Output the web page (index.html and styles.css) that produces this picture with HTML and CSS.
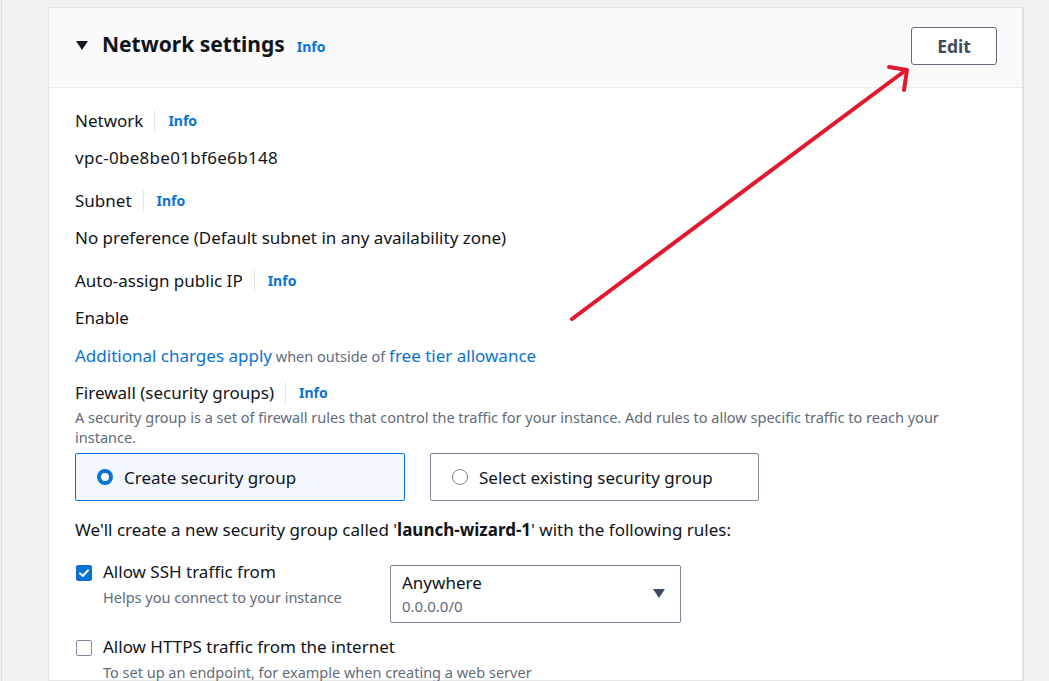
FILE: index.html
```html
<!DOCTYPE html>
<html lang="en">
<head>
<meta charset="utf-8">
<title>Network settings</title>
<link rel="stylesheet" href="styles.css">
</head>
<body>
<div class="page">
  <section class="card">
    <header class="card-header">
      <div class="title-wrap">
        <span class="caret-down"></span>
        <h2 class="title">Network settings</h2>
        <a class="info info-title">Info</a>
      </div>
      <button class="btn-edit">Edit</button>
    </header>
    <div class="card-body">
      <div class="field">
        <div class="label-row"><span class="label">Network</span><span class="sep"></span><a class="info">Info</a></div>
        <div class="value value-vpc">vpc-0be8be01bf6e6b148</div>
      </div>
      <div class="field">
        <div class="label-row"><span class="label">Subnet</span><span class="sep"></span><a class="info">Info</a></div>
        <div class="value">No preference (Default subnet in any availability zone)</div>
      </div>
      <div class="field">
        <div class="label-row"><span class="label">Auto-assign public IP</span><span class="sep"></span><a class="info">Info</a></div>
        <div class="value">Enable</div>
      </div>
      <div class="charges"><a class="link">Additional charges apply</a><span class="small-gray"> when outside of </span><a class="link">free tier allowance</a></div>
      <div class="firewall">
        <div class="label-row"><span class="label">Firewall (security groups)</span><span class="sep"></span><a class="info">Info</a></div>
        <p class="desc">A security group is a set of firewall rules that control the traffic for your instance. Add rules to allow specific traffic to reach your instance.</p>
        <div class="tiles">
          <div class="tile tile-selected"><span class="radio radio-on"></span><span>Create security group</span></div>
          <div class="tile"><span class="radio"></span><span>Select existing security group</span></div>
        </div>
      </div>
      <p class="create-note">We'll create a new security group called '<b>launch-wizard-1</b>' with the following rules:</p>
      <div class="rule">
        <div class="rule-left">
          <span class="checkbox checked"><svg viewBox="0 0 16 16" width="16" height="16"><path d="M4 8.3l2.8 2.7L12 5.3" fill="none" stroke="#fff" stroke-width="2" stroke-linecap="round" stroke-linejoin="round"/></svg></span>
          <div>
            <div class="rule-label">Allow SSH traffic from</div>
            <div class="rule-help">Helps you connect to your instance</div>
          </div>
        </div>
        <div class="select">
          <div>
            <div class="select-main">Anywhere</div>
            <div class="select-sub">0.0.0.0/0</div>
          </div>
          <span class="select-caret"></span>
        </div>
      </div>
      <div class="rule rule-2">
        <div class="rule-left">
          <span class="checkbox"></span>
          <div>
            <div class="rule-label">Allow HTTPS traffic from the internet</div>
            <div class="rule-help">To set up an endpoint, for example when creating a web server</div>
          </div>
        </div>
      </div>
    </div>
  </section>
</div>
<svg class="arrow" width="1049" height="681" viewBox="0 0 1049 681">
  <g fill="none" stroke="#e3172d" stroke-width="4" stroke-linecap="round" stroke-linejoin="round">
    <path d="M572 319L906 70"/>
    <path d="M889 67L907 70L904 90"/>
  </g>
</svg>
</body>
</html>
```
FILE: styles.css
```css
* { box-sizing: border-box; }
html, body { margin: 0; padding: 0; }
body {
  background: #f1f2f2;
  font-family: "Noto Sans", "Open Sans", sans-serif;
  color: #0f141a;
  width: 1049px;
  height: 681px;
  overflow: hidden;
  position: relative;
}
.page {
  margin-left: 1px;
  border-left: 1px solid #d9dcdc;
  padding: 8px 27px 0 47px;
  height: 681px;
}
.card {
  background: #fff;
  box-shadow: 0 0 0 1px #e4e6e6, 1px 1px 1px 1px rgba(0,0,0,0.08);
  height: 672px;
  display: flex;
  flex-direction: column;
}
.card-header {
  flex: none;
  background: #fafafa;
  border-bottom: 1px solid #e9ebed;
  height: 80px;
  display: flex;
  align-items: center;
  justify-content: space-between;
  padding: 0 25px 0 27px;
}
.title-wrap { display: flex; align-items: center; }
.caret-down {
  width: 0; height: 0;
  border-left: 6px solid transparent;
  border-right: 6px solid transparent;
  border-top: 9px solid #16191f;
  margin-right: 14px;
  margin-top: -5px;
}
.title {
  margin: 0;
  font-size: 21px;
  font-weight: 700;
  line-height: 28px;
  margin-top: -7px;
}
.info {
  color: #0972d3;
  font-weight: 700;
  font-size: 14px;
}
.info-title { margin-left: 12px; margin-top: -2px; }
.btn-edit {
  font-family: inherit;
  background: #fff;
  border: 1px solid #5f6b7a;
  border-radius: 3px;
  width: 86px;
  height: 38px;
  font-size: 17.5px;
  font-weight: 700;
  color: #414d5c;
  margin-top: -3px;
  padding: 0;
}
.card-body {
  flex: none;
  padding: 21px 26px 0 26px;
  font-size: 17px;
}
.field { margin-bottom: 19px; }
.label-row {
  display: flex;
  align-items: center;
  height: 24px;
  line-height: 24px;
}
.label { font-size: 17px; }
.sep {
  width: 1px;
  height: 22px;
  background: #e1e4e8;
  margin: 0 13px 0 11px;
}
.value {
  margin-top: 13px;
  line-height: 24px;
}
.value-vpc { letter-spacing: 0.3px; }
.charges {
  margin-top: -5px;
  line-height: 24px;
}
.link { color: #0972d3; }
.small-gray { color: #5f6b7a; font-size: 14.5px; }
.firewall { margin-top: 13px; }
.desc {
  margin: 2px 0 0;
  padding-right: 20px;
  font-size: 14.5px;
  line-height: 20px;
  color: #5f6b7a;
}
.tiles {
  display: flex;
  gap: 25px;
  margin-top: 6px;
}
.tile {
  width: 330px;
  height: 48px;
  border: 1px solid #7d8998;
  border-radius: 2px;
  display: flex;
  align-items: center;
  padding-left: 21px;
  gap: 11px;
  font-size: 17px;
}
.tile + .tile { width: 329px; padding-left: 21px; }
.tile-selected {
  background: #f2f8fd;
  border-color: #0972d3;
}
.radio {
  width: 16px; height: 16px;
  border-radius: 50%;
  border: 1px solid #7d8998;
  background: #fff;
  flex: none;
}
.radio-on {
  border: 4.5px solid #0972d3;
}
.create-note {
  margin: 17px 0 0;
  line-height: 24px;
}
.create-note b { font-weight: 700; }
.rule {
  display: flex;
  align-items: flex-start;
  margin-top: 18px;
}
.rule-left {
  display: flex;
  align-items: flex-start;
  width: 315px;
}
.checkbox {
  width: 16px; height: 16px;
  border: 1.5px solid #7d8998;
  border-radius: 2px;
  margin: 5px 11px 0 1px;
  flex: none;
  background: #fff;
  display: flex;
}
.checkbox.checked {
  background: #0972d3;
  border-color: #0972d3;
}
.checkbox svg { margin: -1.5px; }
.rule-label { line-height: 24px; }
.rule-help {
  font-size: 14.5px;
  color: #5f6b7a;
  line-height: 20px;
  margin-top: 3px;
  white-space: nowrap;
}
.select {
  width: 291px;
  height: 58px;
  margin-top: 5px;
  border: 1px solid #7d8998;
  border-radius: 2px;
  display: flex;
  align-items: center;
  justify-content: space-between;
  padding: 0 15px 0 11px;
}
.select-main { line-height: 24px; margin-top: -2px; }
.select-sub { font-size: 15px; color: #5f6b7a; line-height: 20px; margin-top: 1px; }
.select-caret {
  width: 0; height: 0;
  border-left: 6.5px solid transparent;
  border-right: 6.5px solid transparent;
  border-top: 9px solid #414d5c;
  margin-top: -2px;
}
.rule-2 { margin-top: 12px; }
.arrow {
  position: absolute;
  left: 0; top: 0;
  pointer-events: none;
}
```
